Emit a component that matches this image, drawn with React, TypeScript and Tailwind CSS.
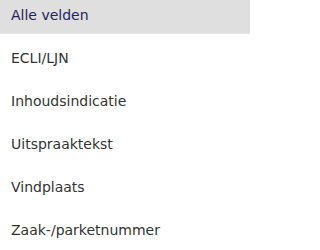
import React from 'react';

const fields = ['ECLI/LJN', 'Inhoudsindicatie', 'Uitspraaktekst', 'Vindplaats', 'Zaak-/parketnummer'];

const App: React.FC = () => {
    return (
        <div className="w-[250px] h-[250px] overflow-hidden bg-white font-['DejaVu_Sans',Verdana,sans-serif] text-[14px] leading-5">
            <ul>
                <li className="h-[34px] pt-[5px] pl-[11px] bg-[#dfdfdf] text-[#262260] border-b border-[#e9e9e9]">Alle velden</li>
                {fields.map((field) => (
                    <li key={field} className="h-[43px] pt-[14px] pl-[11px] text-[#333333]">{field}</li>
                ))}
            </ul>
        </div>
    )
}

export default App
